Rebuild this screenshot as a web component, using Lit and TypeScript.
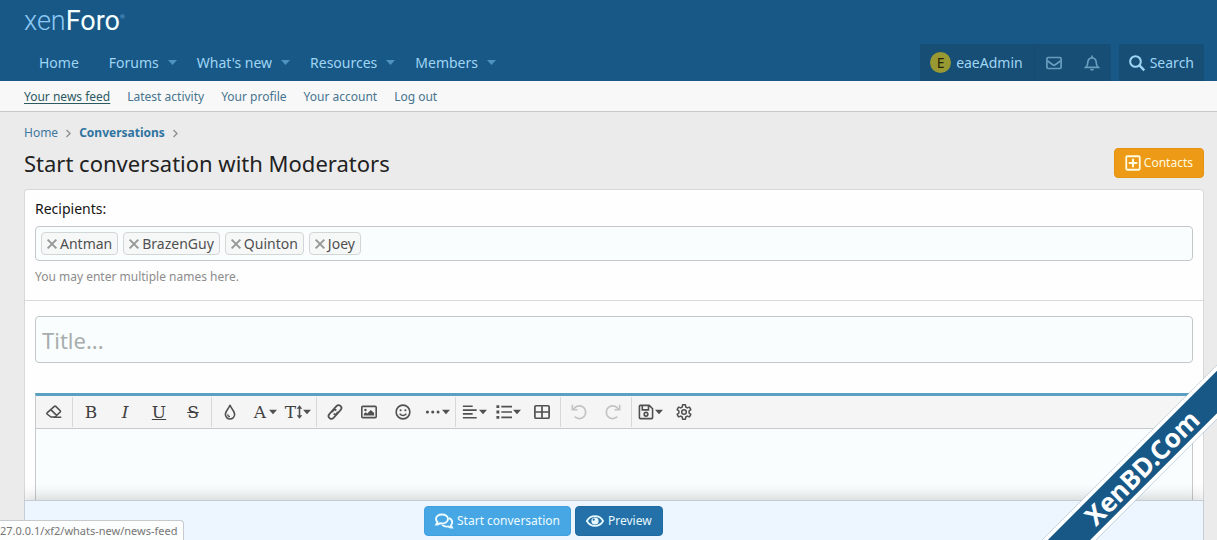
import { LitElement, html, css, svg, nothing } from "lit";
import { customElement, property, state } from "lit/decorators.js";
import { classMap } from "lit/directives/class-map.js";

const icons: Record<string, unknown> = {
  envelope: svg`<rect x="1" y="2.800" width="16" height="12.400" rx="1.400" stroke-width="1.900"/><path d="M1.500 6.500 L7.600 11 Q9 12 10.400 11 L16.500 6.500" stroke-width="1.900"/>`,
  bell: svg`<path d="M2 14 Q4.300 11.800 4.300 8.200 A4.700 4.900 0 0 1 13.700 8.200 Q13.700 11.800 16 14 Z" stroke-width="1.900"/><path d="M9 0.500 V3.400" stroke-width="1.900"/><path d="M6.800 15.400 A2.200 2.200 0 0 0 11.200 15.400 Z" fill="currentColor" stroke="none"/>`,
  search: svg`<circle cx="7.300" cy="7.300" r="6" stroke-width="2.300"/><path d="M11.500 11.500 L17.200 17.200" stroke-width="2.700"/>`,
  plus: svg`<rect x="1.400" y="1.400" width="15.200" height="15.200" rx="1" stroke-width="2"/><path d="M9 4.200 V13.800 M4.200 9 H13.800" stroke-width="2.400"/>`,
  comments: svg`<path d="M7 2.500 C3.600 2.500 1 4.400 1 7 C1 8.300 1.600 9.300 2.500 10.200 L1.200 12.600 C2.800 12.600 4 12.100 5 11.300 C10 12 13 9.800 13 7 C13 4.400 10.400 2.500 7 2.500 Z" stroke-width="1.900"/><path d="M14 6.200 C16 6.900 17.200 8.400 17.200 10.200 C17.200 11.500 16.700 12.500 15.900 13.300 L17 15.600 C15.400 15.600 14.200 15.100 13.300 14.400 C10.800 14.900 8.600 14.300 7.300 12.900" stroke-width="1.900"/>`,
  eye: svg`<path d="M0.900 9 C4.500 2.500 13.500 2.500 17.100 9 C13.500 15.500 4.500 15.500 0.900 9 Z" stroke-width="1.800"/><circle cx="9" cy="9" r="3.600" fill="currentColor" stroke="none"/><circle cx="7.700" cy="7.700" r="1.100" fill="#2371a8" stroke="none"/>`,
  eraser: svg`<path d="M1.200 10 L9.400 2.600 Q10.200 2 11 2.700 L16 7.600 Q16.600 8.300 16 9 L10 14.700 H5.600 L1.200 11.300 Q0.700 10.700 1.200 10 Z M5.400 6.300 L11.900 12.800 M8.500 14.900 H17.200" stroke-width="1.800"/>`,
  drop: svg`<path d="M9 1 C8 5.200 3.800 7.400 3.800 11.600 A5.200 5.200 0 0 0 14.200 11.600 C14.200 7.400 10 5.200 9 1 Z" stroke-width="1.800"/><path d="M6.400 11.600 A2.700 2.700 0 0 0 9 14.200" stroke-width="1.400"/>`,
  updown: svg`<path d="M4 3.500 V14.500" stroke-width="1.800"/><path d="M0.800 5.200 L4 1.200 L7.200 5.200 Z M0.800 12.800 L4 16.800 L7.200 12.800 Z" fill="currentColor" stroke="none"/>`,
  link: svg`<g transform="rotate(-48 9 9)" stroke-width="1.900"><path d="M10.900 10.600 A3.200 3.200 0 0 1 8.200 12.200 H3 A3.200 3.200 0 0 1 3 5.800 H8.200 A3.200 3.200 0 0 1 11.300 9"/><path d="M7.100 7.400 A3.200 3.200 0 0 1 9.800 5.800 H15 A3.200 3.200 0 0 1 15 12.200 H9.800 A3.200 3.200 0 0 1 6.700 9"/></g>`,
  image: svg`<rect x="0.900" y="2.700" width="16.200" height="12.600" rx="1.200" stroke-width="1.800"/><circle cx="5" cy="6.700" r="1.400" fill="currentColor" stroke="none"/><path d="M3.200 13 V11 L5.400 9.200 L7 10.600 L11 6.700 L14.800 10.200 V13 Z" fill="currentColor" stroke="none"/>`,
  smile: svg`<circle cx="9" cy="9" r="7.700" stroke-width="1.800"/><circle cx="6.300" cy="7" r="1.200" fill="currentColor" stroke="none"/><circle cx="11.700" cy="7" r="1.200" fill="currentColor" stroke="none"/><path d="M5.200 11 Q9 15 12.800 11" stroke-width="1.700"/>`,
  dots: svg`<g fill="currentColor" stroke="none"><circle cx="2.700" cy="9" r="1.700"/><circle cx="8.700" cy="9" r="1.700"/><circle cx="14.700" cy="9" r="1.700"/></g>`,
  align: svg`<path d="M1 2.500 H12 M1 6.800 H16.500 M1 11.200 H12 M1 15.500 H16.500" stroke-width="1.900"/>`,
  list: svg`<path d="M6 3 H18 M6 9 H18 M6 15 H18" stroke-width="1.900"/><path d="M0.500 3 H3.700 M0.500 9 H3.700 M0.500 15 H3.700" stroke-width="3.200"/>`,
  table: svg`<rect x="1" y="2" width="16" height="14" rx="1.200" stroke-width="1.900"/><path d="M9 2.500 V15.500 M1.500 9 H16.500" stroke-width="1.900"/>`,
  undo: svg`<path d="M2.800 6.200 A7.200 7.200 0 1 1 4.200 14.300 M1.500 0.800 V6.500 H7.400" stroke-width="1.900"/>`,
  redo: svg`<path d="M15.200 6.200 A7.200 7.200 0 1 0 13.800 14.300 M16.500 0.800 V6.500 H10.600" stroke-width="1.900"/>`,
  save: svg`<path d="M2.500 1.600 H12.600 L16.400 5.400 V15.400 Q16.400 16.400 15.400 16.400 H2.600 Q1.600 16.400 1.600 15.400 V2.500 Q1.600 1.600 2.500 1.600 Z M4.800 2 V6.600 H11.800 V2" stroke-width="1.800"/><circle cx="9" cy="11.500" r="2.100" stroke-width="1.800"/>`,
  gear: svg`<path d="M7.400 0.900 H10.600 L11 3.400 L12.700 4.400 L15.100 3.500 L16.700 6.300 L14.700 7.900 V10.100 L16.700 11.700 L15.100 14.500 L12.700 13.600 L11 14.600 L10.600 17.100 H7.400 L7 14.600 L5.300 13.600 L2.900 14.500 L1.300 11.700 L3.300 10.100 V7.900 L1.300 6.300 L2.900 3.500 L5.300 4.400 L7 3.400 Z" stroke-linejoin="round" stroke-width="1.700"/><circle cx="9" cy="9" r="2.600" stroke-width="1.700"/>`,
  chevron: svg`<path d="M5 2 L12 9 L5 16" stroke-width="2.800"/>`,
  times: svg`<path d="M2.500 2.500 L15.500 15.500 M15.500 2.500 L2.500 15.500" stroke-width="3"/>`,
  caret: svg`<path d="M0 4 H18 L9 14 Z" fill="currentColor" stroke="none"/>`,
};

@customElement("xf-icon")
class XfIcon extends LitElement {
  @property() name = "";

  static styles = css`
    :host { display: inline-flex; flex: none; width: 18px; height: 18px; }
    .glyph { width: 100%; height: 100%; fill: none; stroke: currentColor; stroke-width: 1.5; overflow: visible; }
  `;

  render() {
    const box = this.name === "updown" ? "0 0 8 18" : "0 0 18 18";
    return html`<svg class="glyph" viewBox=${box} aria-hidden="true">${icons[this.name]}</svg>`;
  }
}

interface Tool {
  label: string;
  icon?: string;
  letter?: string;
  style?: string;
  menu?: boolean;
  disabled?: boolean;
}

const toolGroups: Tool[][] = [
  [{ label: "Remove formatting", icon: "eraser" }],
  [
    { label: "Bold", letter: "B" },
    { label: "Italic", letter: "I", style: "italic" },
    { label: "Underline", letter: "U", style: "underline" },
    { label: "Strike-through", letter: "S", style: "strike" },
  ],
  [
    { label: "Text color", icon: "drop" },
    { label: "Font family", letter: "A", menu: true },
    { label: "Font size", letter: "T", icon: "updown", menu: true },
  ],
  [
    { label: "Insert link", icon: "link" },
    { label: "Insert image", icon: "image" },
    { label: "Smilies", icon: "smile" },
    { label: "Insert", icon: "dots", menu: true },
  ],
  [
    { label: "Alignment", icon: "align", menu: true },
    { label: "List", icon: "list", menu: true },
    { label: "Insert table", icon: "table" },
  ],
  [
    { label: "Undo", icon: "undo", disabled: true },
    { label: "Redo", icon: "redo", disabled: true },
  ],
  [
    { label: "Drafts", icon: "save", menu: true },
    { label: "Toggle BB code", icon: "gear" },
  ],
];

@customElement("xf-toolbar")
class XfToolbar extends LitElement {
  static styles = css`
    :host { display: block; }
    .bar { display: flex; flex-wrap: wrap; padding-left: 1px; min-height: 32px; background: #f5f5f5; border-bottom: 1px solid #c6cacb; }
    .group { display: flex; margin: 1px 1px 1px 0; padding-right: 1px; border-right: 1px solid #d8d8d8; }
    .group:last-child { border-right: 0; }
    .tool { display: flex; align-items: center; justify-content: center; width: 34px; height: 30px; padding: 0; border: 0; background: none; color: #505050; }
    .tool:disabled { color: #c3c3c3; }
    .face { display: flex; align-items: center; justify-content: center; width: 18px; height: 18px; }
    .symbol { width: 16px; height: 16px; }
    .updown { width: 7px; height: 16px; }
    .letter { font: 17px/18px "DejaVu Serif", serif; color: #404040; }
    .italic { font-style: italic; }
    .underline { text-decoration: underline; }
    .strike { text-decoration: line-through; }
    .caret { width: 8px; height: 8px; }
  `;

  private tool(t: Tool) {
    return html`<button class="tool" type="button" aria-label=${t.label} ?disabled=${!!t.disabled}>
      <span class="face">
        ${t.letter
          ? html`<span class=${classMap({ letter: true, italic: t.style === "italic", underline: t.style === "underline", strike: t.style === "strike" })}>${t.letter}</span>`
          : nothing}
        ${t.icon ? html`<xf-icon class=${t.icon === "updown" ? "updown" : "symbol"} name=${t.icon}></xf-icon>` : nothing}
      </span>
      ${t.menu ? html`<xf-icon class="caret" name="caret"></xf-icon>` : nothing}
    </button>`;
  }

  render() {
    return html`<div class="bar" role="toolbar" aria-label="Formatting">
      ${toolGroups.map((g) => html`<div class="group">${g.map((t) => this.tool(t))}</div>`)}
    </div>`;
  }
}

@customElement("app-root")
class AppRoot extends LitElement {
  @state() private recipients = ["Antman", "BrazenGuy", "Quinton", "Joey"];

  static styles = css`
    :host { display: flex; flex-direction: column; min-height: 100vh; position: relative; background: #ebebeb; color: #141414; font: 14px/20px "Noto Sans", "Open Sans", sans-serif; }
    * { box-sizing: border-box; }
    a { color: inherit; text-decoration: none; }
    button, input, textarea { font: inherit; }

    .header { background: #185886; color: #9fd5f5; padding: 9px 13px 0 24px; }
    .logo { display: flex; width: max-content; font: 300 27px/24px Roboto, sans-serif; color: #8dc8f4; }
    .logo-main { font-weight: 400; color: #f4ffff; }
    .logo-mark { font-size: 6px; line-height: 16px; }
    .nav { display: flex; align-items: flex-end; justify-content: space-between; margin-top: 11px; }
    .nav-list { display: flex; margin: 0; padding: 0; list-style: none; }
    .nav-item { display: flex; align-items: center; height: 37px; padding: 0 5px 0 15px; }
    .nav-item:first-child { padding-right: 15px; }
    .nav-caret { width: 9px; height: 9px; margin-left: 9px; color: #4f93c1; }
    .account { display: flex; gap: 8px; }
    .panel { display: flex; height: 37px; background: #174e75; border-radius: 3px 3px 0 0; }
    .panel-link { display: flex; align-items: center; gap: 5px; padding: 0 10px; }
    .user { border-right: 1px solid #184a6d; padding-right: 11px; }
    .alert { width: 38px; justify-content: center; color: #699dbe; }
    .avatar { display: grid; place-items: center; width: 21px; height: 21px; border-radius: 50%; background: #999933; color: #222206; font-size: 14px; }
    .icon { width: 16px; height: 16px; }

    .subnav { display: flex; gap: 17px; padding: 0 24px; height: 31px; background: #f8f8f8; border-bottom: 1px solid #c8c8c8; color: #47748f; font-size: 12px; line-height: 32px; }
    .current { color: #2c5a63; text-decoration: underline; text-underline-offset: 2px; }

    .page { flex: 1; display: flex; flex-direction: column; padding: 11px 13px 0 24px; }
    .crumbs { display: flex; align-items: center; gap: 6px; color: #3e789f; font-size: 12px; }
    .crumb-arrow { width: 9px; height: 9px; color: #909090; }
    .strong { font-weight: 700; color: #2f74a1; }
    .title-row { display: flex; align-items: center; justify-content: space-between; margin-top: 5px; }
    .title { margin: 0; font-size: 22px; line-height: 30px; font-weight: 400; color: #222222; }
    .button { display: flex; align-items: center; gap: 4px; height: 30px; padding: 0 10px; border: 1px solid transparent; border-radius: 4px; color: #fff; font-size: 12px; }
    .contacts { gap: 3px; background: #ed9a17; border-color: #e59310; color: #fffbe0; }
    .start { background: #47a7e5; border-color: #3fa0df; color: #eefcff; }
    .preview { background: #2371a8; border-color: #1f6ba1; color: #e8f8ff; }

    .block { flex: 1; display: flex; flex-direction: column; margin-top: 11px; background: #fefefe; border: 1px solid #d8d8d8; border-bottom: 0; border-radius: 4px 4px 0 0; }
    .row { display: flex; flex-direction: column; padding: 9px 10px 13px; border-bottom: 1px solid #d8dadb; }
    .tokens { display: flex; flex-wrap: wrap; gap: 5px; margin: 7px 0 6px; padding: 5px; min-height: 35px; background: #f9fdfe; border: 1px solid #c3c8ca; border-radius: 4px; }
    .token { display: flex; align-items: center; gap: 2px; height: 23px; padding: 0 5px 0 4px; border: 1px solid #d3d6d6; border-radius: 4px; background: #f6f8f8; color: #505050; }
    .remove { display: flex; padding: 0; border: 0; background: none; color: #979797; }
    .cross { width: 12px; height: 12px; }
    .token-input { flex: 1; min-width: 60px; border: 0; padding: 0; background: none; outline: 0; }
    .hint { color: #8c8c8c; font-size: 12px; }
    .compose { flex: 1; display: flex; flex-direction: column; padding: 15px 10px 0; }
    .title-input { width: 100%; height: 47px; padding: 0 6px; background: #f9fdfe; border: 1px solid #c3c8ca; border-radius: 4px; font-size: 22px; outline: 0; }
    .title-input::placeholder { color: #a8adad; opacity: 1; }
    .editor { flex: 1; display: flex; flex-direction: column; margin-top: 30px; border: 1px solid #c6cacb; border-top: 3px solid #5ba0c3; border-bottom: 0; }
    .message { display: block; flex: 1; width: 100%; min-height: 71px; padding: 10px; border: 0; resize: none; outline: 0; background: #f9fdfe; }
    .submit { position: relative; display: flex; justify-content: center; gap: 4px; min-height: 40px; padding: 5px 12% 4px 0; margin-left: -1px; margin-right: -1px; background: #edf6fe; border: 1px solid #c5cdd3; border-bottom: 0; box-shadow: 0 -2px 16px rgba(20, 20, 20, 0.2); clip-path: inset(-16px 0 0 0); }

    .status { position: absolute; left: 0; bottom: 0; height: 20px; padding: 0 5px 0 0; background: #fcfdfd; border: 1px solid #c6cacd; border-left: 0; border-bottom: 0; border-radius: 0 4px 0 0; color: #767676; font-size: 11px; line-height: 20px; }
    .ribbon { position: absolute; right: 0; bottom: 0; width: 180px; height: 180px; overflow: hidden; pointer-events: none; }
    .ribbon-band { position: absolute; left: -44px; top: 87px; width: 300px; height: 38px; padding-right: 4px; display: flex; align-items: center; justify-content: center; transform: rotate(-45deg); background: #185886; border: solid #fff; border-width: 4px 0; color: #fff; font: 700 26px/30px "Noto Sans", sans-serif; }
  `;

  private remove(name: string) {
    this.recipients = this.recipients.filter((r) => r !== name);
  }

  render() {
    const menus = ["Forums", "What's new", "Resources", "Members"];
    return html`
      <header class="header">
        <a class="logo" href="#"><span>xen</span><span class="logo-main">Foro</span><span class="logo-mark">®</span></a>
        <nav class="nav">
          <ul class="nav-list">
            <li class="nav-item"><a href="#">Home</a></li>
            ${menus.map((m) => html`<li class="nav-item"><a href="#">${m}</a><xf-icon class="nav-caret" name="caret"></xf-icon></li>`)}
          </ul>
          <div class="account">
            <div class="panel">
              <a class="panel-link user" href="#"><span class="avatar">E</span><span>eaeAdmin</span></a>
              <a class="panel-link alert" href="#" aria-label="Conversations"><xf-icon class="icon" name="envelope"></xf-icon></a>
              <a class="panel-link alert" href="#" aria-label="Alerts"><xf-icon class="icon" name="bell"></xf-icon></a>
            </div>
            <div class="panel">
              <a class="panel-link" href="#"><xf-icon class="icon" name="search"></xf-icon><span>Search</span></a>
            </div>
          </div>
        </nav>
      </header>
      <nav class="subnav">
        <a class="current" href="#">Your news feed</a>
        <a href="#">Latest activity</a>
        <a href="#">Your profile</a>
        <a href="#">Your account</a>
        <a href="#">Log out</a>
      </nav>
      <main class="page">
        <nav class="crumbs">
          <a href="#">Home</a><xf-icon class="crumb-arrow" name="chevron"></xf-icon>
          <a class="strong" href="#">Conversations</a><xf-icon class="crumb-arrow" name="chevron"></xf-icon>
        </nav>
        <div class="title-row">
          <h1 class="title">Start conversation with Moderators</h1>
          <button class="button contacts" type="button"><xf-icon class="icon" name="plus"></xf-icon>Contacts</button>
        </div>
        <form class="block" @submit=${(e: Event) => e.preventDefault()}>
          <div class="row">
            <label for="recipients">Recipients:</label>
            <div class="tokens">
              ${this.recipients.map(
                (r) => html`<span class="token"><button class="remove" type="button" aria-label="Remove ${r}" @click=${() => this.remove(r)}><xf-icon class="cross" name="times"></xf-icon></button>${r}</span>`
              )}
              <input class="token-input" id="recipients" type="text" />
            </div>
            <span class="hint">You may enter multiple names here.</span>
          </div>
          <div class="compose">
            <input class="title-input" type="text" placeholder="Title..." aria-label="Title" />
            <div class="editor">
              <xf-toolbar></xf-toolbar>
              <textarea class="message" aria-label="Message"></textarea>
            </div>
          </div>
          <div class="submit">
            <button class="button start" type="submit"><xf-icon name="comments"></xf-icon>Start conversation</button>
            <button class="button preview" type="button"><xf-icon name="eye"></xf-icon>Preview</button>
          </div>
        </form>
      </main>
      <div class="status">27.0.0.1/xf2/whats-new/news-feed</div>
      <div class="ribbon"><div class="ribbon-band">XenBD.Com</div></div>
    `;
  }
}
